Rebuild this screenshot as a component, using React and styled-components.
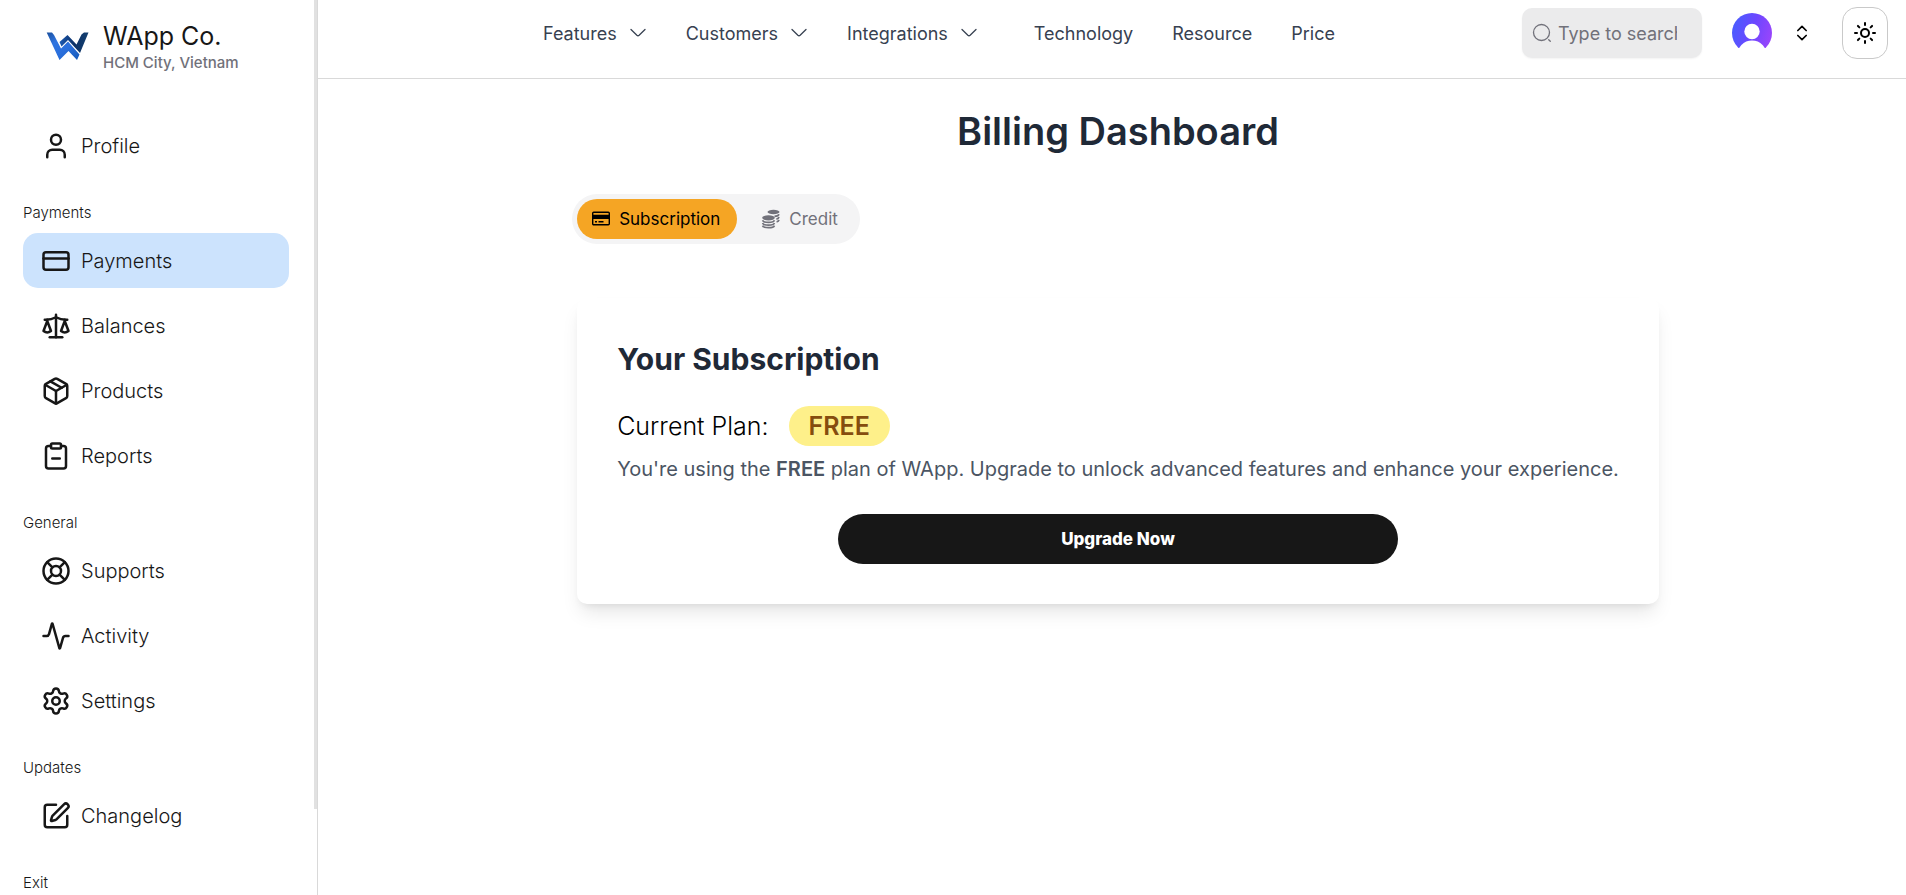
import React from "react";
import styled, { createGlobalStyle } from "styled-components";
import {
  User, CreditCard, Scale, Package, ClipboardMinus, LifeBuoy, Activity,
  Settings, SquarePen, ChevronsUpDown, Sun,
} from "lucide-react";

const GlobalStyle = createGlobalStyle`
  *, *::before, *::after { box-sizing: border-box; }
  body {
    margin: 0;
    background: #fff;
    color: #171717;
    font-family: Inter, "Liberation Sans", sans-serif;
  }
  a { color: inherit; text-decoration: none; }
  h1, h2, p, ul { margin: 0; padding: 0; }
  ul { list-style: none; }
  button, input { font: inherit; color: inherit; }
  button { cursor: pointer; }
  svg { flex: none; }
`;

const Page = styled.div`
  display: flex;
  height: 100vh;
  overflow: hidden;
`;

const Sidebar = styled.aside`
  flex: none;
  width: 318px;
  display: flex;
  border-right: 1px solid #d9d9d9;
  overflow: hidden;
`;

const SidebarBody = styled.div`
  flex: 1;
  padding: 18px 25px 0 23px;
`;

const ScrollThumb = styled.div`
  flex: none;
  width: 3px;
  height: calc(100% - 86px);
  background: #e1e1e1;
`;

const Brand = styled.div`
  display: flex;
  align-items: center;
  gap: 12px;
  height: 56px;
  padding-left: 22px;
`;

const BrandName = styled.div`
  font-size: 25px;
  line-height: 34px;
`;

const BrandPlace = styled.div`
  font-size: 15px;
  line-height: 20px;
  font-weight: 500;
  color: #71717a;
`;

const Nav = styled.nav`
  display: flex;
  flex-direction: column;
  padding-top: 44px;
`;

const GroupLabel = styled.h2`
  padding: 27px 0 7px;
  font-size: 15px;
  line-height: 26px;
  font-weight: 300;
`;

const ItemList = styled.ul`
  display: flex;
  flex-direction: column;
  gap: 10px;
`;

const NavItem = styled.a`
  display: flex;
  align-items: center;
  gap: 10px;
  height: 55px;
  padding: 0 18px;
  border-radius: 15px;
  background: ${(p) => (p.$active ? "#cce3fd" : "transparent")};
  font-size: 20px;
  font-weight: 300;
`;

const Main = styled.div`
  flex: 1;
  min-width: 0;
  display: flex;
  flex-direction: column;
`;

const Header = styled.header`
  display: flex;
  align-items: center;
  height: 79px;
  padding: 0 18px 12px 225px;
  border-bottom: 1px solid #d9d9d9;
`;

const Menu = styled.nav`
  display: flex;
  align-items: center;
  gap: 56px;
  font-size: 18px;
  color: #374151;
`;

const MenuGroup = styled.div`
  display: flex;
  align-items: center;
  gap: 39px;
`;

const MenuButton = styled.button`
  display: flex;
  align-items: center;
  gap: 13px;
  padding: 0;
  border: 0;
  background: none;
`;

const Tools = styled.div`
  display: flex;
  align-items: center;
  margin-left: auto;
`;

const SearchBox = styled.label`
  display: flex;
  align-items: center;
  gap: 6px;
  width: 180px;
  height: 50px;
  padding: 0 25px 0 10px;
  border-radius: 10px;
  background: #ebebec;
  box-shadow: 0 1px 2px rgba(0, 0, 0, 0.05);
  color: #71717a;
`;

const SearchInput = styled.input`
  flex: 1;
  min-width: 0;
  padding: 0;
  border: 0;
  outline: 0;
  background: none;
  font-size: 18px;
  &::placeholder { color: #71717a; opacity: 1; }
`;

const IconButton = styled.button`
  display: flex;
  padding: 0;
  border: 0;
  background: none;
  color: #000;
`;

const ThemeButton = styled.button`
  display: flex;
  align-items: center;
  justify-content: center;
  width: 46px;
  height: 52px;
  padding: 0;
  border: 1px solid #c9c9c9;
  border-radius: 15px;
  background: #fff;
  color: #000;
`;

const Account = styled.div`
  display: flex;
  align-items: center;
  gap: 20px;
  margin: 0 30px;
`;

const Content = styled.main`
  display: flex;
  flex-direction: column;
  align-items: center;
  padding: 28px 0 0 12px;
`;

const Title = styled.h1`
  font-size: 38px;
  line-height: 48px;
  font-weight: 600;
  color: #1f2937;
`;

const Billing = styled.div`
  display: flex;
  flex-direction: column;
  align-items: flex-start;
  padding-top: 39px;
`;

const Tabs = styled.div`
  display: flex;
  gap: 10px;
  margin-left: -5px;
  padding: 5px;
  border-radius: 25px;
  background: #f4f4f5;
`;

const Tab = styled.button`
  display: flex;
  align-items: center;
  gap: 8px;
  height: 40px;
  padding: 0 17px 0 14px;
  border: 0;
  border-radius: 20px;
  background: ${(p) => (p.$active ? "#f5a524" : "transparent")};
  color: ${(p) => (p.$active ? "#000" : "#71717a")};
  font-size: 17px;
`;

const Card = styled.section`
  display: flex;
  flex-direction: column;
  margin-top: 54px;
  padding: 40px;
  border-radius: 10px;
  background: #fff;
  box-shadow: 0 12px 19px -4px rgba(0, 0, 0, 0.1), 0 5px 8px -5px rgba(0, 0, 0, 0.1);
`;

const CardTitle = styled.h2`
  font-size: 30px;
  line-height: 42px;
  font-weight: 700;
  color: #1f2937;
`;

const Plan = styled.div`
  display: flex;
  align-items: center;
  gap: 20px;
  margin-top: 26px;
  font-size: 25px;
  font-weight: 300;
  color: #000;
`;

const Badge = styled.span`
  padding: 0 20px;
  border-radius: 20px;
  background: #fef08a;
  font-weight: 600;
  line-height: 40px;
  color: #854d0e;
`;

const Note = styled.p`
  margin-top: 8px;
  font-size: 20px;
  line-height: 30px;
  color: #4b5563;
  b { font-weight: 600; }
`;

const UpgradeButton = styled.button`
  align-self: center;
  width: 56%;
  height: 50px;
  margin-top: 30px;
  border: 0;
  border-radius: 25px;
  background: #171717;
  color: #fff;
  font-size: 17px;
  font-weight: 800;
`;

function Logo() {
  return (
    <svg width="46" height="42" viewBox="0 0 46 42" aria-hidden="true">
      <defs>
        <linearGradient id="logoLeft" x1="0" y1="0" x2="1" y2="1">
          <stop offset="0" stopColor="#1a4f9c" />
          <stop offset="0.3" stopColor="#2f74e0" />
          <stop offset="0.6" stopColor="#2a6fdc" />
          <stop offset="1" stopColor="#1459b8" />
        </linearGradient>
        <linearGradient id="logoRight" x1="0" y1="0" x2="1" y2="0">
          <stop offset="0" stopColor="#1c5bb5" />
          <stop offset="0.5" stopColor="#0a2f66" />
          <stop offset="1" stopColor="#15406f" />
        </linearGradient>
      </defs>
      <path d="M1.7 7.5H7L9 10L16 23.5L23 16.5L34.5 29.5L32 35L23.5 26L14.5 35Z" fill="url(#logoLeft)" />
      <path d="M14.5 17L22.5 10L31.5 19.5L36.5 9.5L39 7.5H43.5L35 28L23 15L16.5 21.5Z" fill="url(#logoRight)" />
    </svg>
  );
}

function ThinChevron() {
  return (
    <svg width="17" height="20" viewBox="0 0 17 20" fill="none" stroke="currentColor" strokeWidth="1.3" strokeLinecap="round" strokeLinejoin="round" aria-hidden="true">
      <path d="M1 6.5L6.9 12.2Q8 13.2 9.1 12.2L15 6.5" />
    </svg>
  );
}

function SearchIcon() {
  return (
    <svg width="20" height="20" viewBox="0 0 20 20" fill="none" stroke="currentColor" strokeWidth="1.3" strokeLinecap="round" aria-hidden="true">
      <circle cx="9.5" cy="9.5" r="8" />
      <path d="M16.7 16.7L18.3 18.3" />
    </svg>
  );
}

function Avatar() {
  return (
    <svg width="40" height="40" viewBox="0 0 40 40" aria-hidden="true">
      <defs>
        <linearGradient id="avatarFill" x1="0" y1="0.35" x2="1" y2="0.65">
          <stop offset="0" stopColor="#4a5cff" />
          <stop offset="0.5" stopColor="#6c47ff" />
          <stop offset="1" stopColor="#9b45fb" />
        </linearGradient>
      </defs>
      <circle cx="20" cy="20" r="20" fill="url(#avatarFill)" />
      <circle cx="20" cy="18.5" r="7.7" fill="#fff" />
      <circle cx="20" cy="42.5" r="15" fill="#fff" />
      <path d="M0 35H40V40H0Z" fill="#fff" />
    </svg>
  );
}

function PaymentIcon() {
  return (
    <svg width="20" height="20" viewBox="0 0 20 20" aria-hidden="true">
      <rect x="1.7" y="3.2" width="16.6" height="12.6" rx="1" fill="none" stroke="currentColor" strokeWidth="1.4" />
      <path d="M2 5.7H18V10H2ZM4 12H6V13.6H4ZM7.5 12H12.5V13.6H7.5Z" fill="currentColor" />
    </svg>
  );
}

function CoinsIcon() {
  return (
    <svg width="20" height="20" viewBox="0 0 20 20" fill="none" stroke="currentColor" strokeWidth="1.7" aria-hidden="true">
      <ellipse cx="12.5" cy="3" rx="6" ry="2.2" fill="currentColor" stroke="none" />
      <path d="M18 5.2C17.6 6.6 16 7.2 13.5 7.4M18 8C17.7 9.2 16.8 9.8 15.4 10.1M18 10.8C17.8 11.8 17 12.5 15.6 12.8" />
      <ellipse cx="7.5" cy="8.8" rx="6.3" ry="2.6" fill="currentColor" stroke="none" />
      <path d="M1.6 11.2C2.6 14 12.4 14 13.4 11.2M1.6 14C2.6 16.8 12.4 16.8 13.4 14M1.6 16.6C2.6 19.4 12.4 19.4 13.4 16.6" />
    </svg>
  );
}

const sections = [
  { items: [["Profile", User]] },
  { label: "Payments", items: [["Payments", CreditCard], ["Balances", Scale], ["Products", Package], ["Reports", ClipboardMinus]] },
  { label: "General", items: [["Supports", LifeBuoy], ["Activity", Activity], ["Settings", Settings]] },
  { label: "Updates", items: [["Changelog", SquarePen]] },
  { label: "Exit", items: [] },
];

const dropdowns = ["Features", "Customers", "Integrations"];
const links = ["Technology", "Resource", "Price"];

export default function App() {
  return (
    <Page>
      <GlobalStyle />
      <Sidebar>
        <SidebarBody>
          <Brand>
            <Logo />
            <div>
              <BrandName>WApp Co.</BrandName>
              <BrandPlace>HCM City, Vietnam</BrandPlace>
            </div>
          </Brand>
          <Nav>
            {sections.map(({ label, items }) => (
              <div key={label || "top"}>
                {label && <GroupLabel>{label}</GroupLabel>}
                <ItemList>
                  {items.map(([name, Icon]) => (
                    <li key={name}>
                      <NavItem href="#" $active={name === "Payments"}>
                        <Icon size={30} />
                        {name}
                      </NavItem>
                    </li>
                  ))}
                </ItemList>
              </div>
            ))}
          </Nav>
        </SidebarBody>
        <ScrollThumb />
      </Sidebar>
      <Main>
        <Header>
          <Menu>
            <MenuGroup>
              {dropdowns.map((name) => (
                <MenuButton key={name}>
                  {name}
                  <ThinChevron />
                </MenuButton>
              ))}
            </MenuGroup>
            <MenuGroup>
              {links.map((name) => (
                <a key={name} href="#">{name}</a>
              ))}
            </MenuGroup>
          </Menu>
          <Tools>
            <SearchBox>
              <SearchIcon />
              <SearchInput placeholder="Type to search..." aria-label="Search" />
            </SearchBox>
            <Account>
              <IconButton aria-label="Account"><Avatar /></IconButton>
              <IconButton aria-label="Switch account"><ChevronsUpDown size={20} /></IconButton>
            </Account>
            <ThemeButton aria-label="Theme"><Sun size={24} /></ThemeButton>
          </Tools>
        </Header>
        <Content>
          <Title>Billing Dashboard</Title>
          <Billing>
            <Tabs role="tablist">
              <Tab role="tab" aria-selected="true" $active><PaymentIcon />Subscription</Tab>
              <Tab role="tab" aria-selected="false"><CoinsIcon />Credit</Tab>
            </Tabs>
            <Card>
              <CardTitle>Your Subscription</CardTitle>
              <Plan>Current Plan: <Badge>FREE</Badge></Plan>
              <Note>
                You're using the <b>FREE</b> plan of WApp. Upgrade to unlock advanced features and enhance your experience.
              </Note>
              <UpgradeButton>Upgrade Now</UpgradeButton>
            </Card>
          </Billing>
        </Content>
      </Main>
    </Page>
  );
}
